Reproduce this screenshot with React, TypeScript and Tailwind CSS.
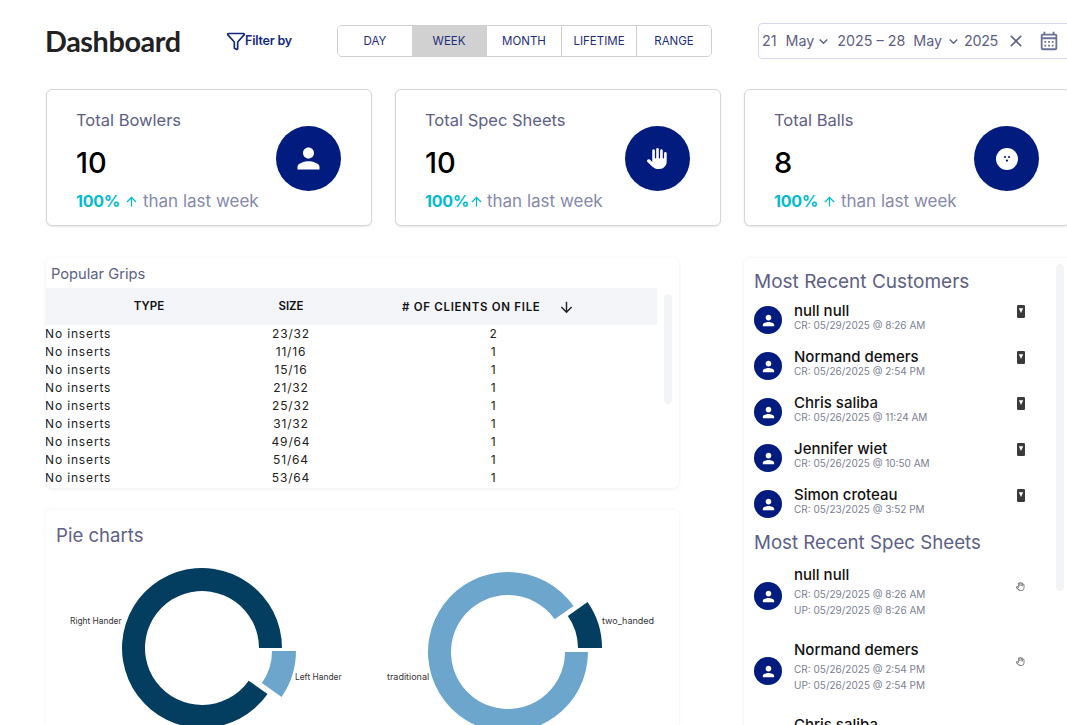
import React from "react";
import { MdPerson, MdOutlineCalendarMonth, MdKeyboardArrowDown, MdArrowUpward, MdArrowDownward, MdClose } from "react-icons/md";
import { FaHand, FaRegHand } from "react-icons/fa6";
import { Funnel } from "lucide-react";

function ring(cx: number, cy: number, R: number, r: number, a0: number, a1: number) {
  const p = (rad: number, a: number) => {
    const t = (a * Math.PI) / 180;
    return `${(cx + rad * Math.cos(t)).toFixed(2)} ${(cy + rad * Math.sin(t)).toFixed(2)}`;
  };
  const large = Math.abs(a1 - a0) > 180 ? 1 : 0;
  return `M${p(R, a0)} A${R} ${R} 0 ${large} 1 ${p(R, a1)} L${p(r, a1)} A${r} ${r} 0 ${large} 0 ${p(r, a0)} Z`;
}

function StatCard({ title, value, gap, icon }: { title: string; value: string; gap: string; icon: React.ReactNode }) {
  return (
    <div className="relative w-[326px] h-[137px] shrink-0 rounded-[6px] border border-[#d6d6d8] bg-white shadow-[0_1px_2px_rgba(0,0,0,0.1)] pl-[29px] pt-[20px]">
      <div className="text-[16.5px] leading-[20px] text-[#5d6185]">{title}</div>
      <div className="mt-[15px] text-[29px] leading-[36px] text-black font-medium">{value}</div>
      <div className="mt-[9px] flex items-center leading-[22px]">
        <span className="text-[16px] font-bold tracking-[-0.2px] text-[#00bccd]">100%</span>
        <MdArrowUpward className={`text-[#00bccd] ${gap}`} size={15} />
        <span className="text-[17px] text-[#8589ab]">than last week</span>
      </div>
      <div className="absolute left-[229px] top-[36px] w-[65px] h-[65px] rounded-full bg-[#021b7f] flex items-center justify-center text-white">
        {icon}
      </div>
    </div>
  );
}

function Avatar() {
  return (
    <div className="w-[28px] h-[28px] rounded-full bg-[#021b7f] flex items-center justify-center shrink-0 text-white">
      <MdPerson size={17} />
    </div>
  );
}

function PhoneIcon() {
  return (
    <svg width="8" height="13" viewBox="0 0 8 13">
      <rect width="8" height="13" rx="1.2" fill="#3a3a3c" />
      <path d="M1.8 3.2h4.4L4 8z" fill="#fff" />
    </svg>
  );
}

const customers = [
  ["null null", "CR: 05/29/2025 @ 8:26 AM"],
  ["Normand demers", "CR: 05/26/2025 @ 2:54 PM"],
  ["Chris saliba", "CR: 05/26/2025 @ 11:24 AM"],
  ["Jennifer wiet", "CR: 05/26/2025 @ 10:50 AM"],
  ["Simon croteau", "CR: 05/23/2025 @ 3:52 PM"],
];

const specs = [
  ["null null", "CR: 05/29/2025 @ 8:26 AM", "UP: 05/29/2025 @ 8:26 AM"],
  ["Normand demers", "CR: 05/26/2025 @ 2:54 PM", "UP: 05/26/2025 @ 2:54 PM"],
  ["Chris saliba", "CR: 05/26/2025 @ 11:24 AM", "UP: 05/26/2025 @ 11:24 AM"],
];

const rows = [
  ["23/32", "2"],
  ["11/16", "1"],
  ["15/16", "1"],
  ["21/32", "1"],
  ["25/32", "1"],
  ["31/32", "1"],
  ["49/64", "1"],
  ["51/64", "1"],
  ["53/64", "1"],
];

const tabs = ["DAY", "WEEK", "MONTH", "LIFETIME", "RANGE"];

export default function App() {
  return (
    <div className="relative w-[1067px] h-[725px] overflow-hidden bg-white font-['Inter',sans-serif] pl-[46px] pt-[23px]">
      <header className="flex items-center h-[36px] w-[1100px]">
        <h1 className="w-[180px] -ml-px mr-px font-['Lato',sans-serif] font-bold text-[28.8px] tracking-[-0.4px] text-[#222] leading-none">Dashboard</h1>
        <div className="w-[111px] flex items-center text-[#10297f] text-[12.5px] font-semibold tracking-[-0.2px]">
          <Funnel size={20} strokeWidth={2} className="text-[#10297f]" />
          <span className="-ml-px">Filter by</span>
        </div>
        <div className="flex w-[375px] h-[32px] rounded-[5px] border border-[#cfcfd2] overflow-hidden">
          {tabs.map((t, i) => (
            <div
              key={t}
              className={`flex-1 flex items-center justify-center pt-px text-[11.5px] text-[#1e2d80] ${i === 1 ? "bg-[#d1d1d1]" : "bg-white"} ${i > 1 ? "border-l border-[#cfcfd2]" : ""}`}
            >
              {t}
            </div>
          ))}
        </div>
        <div className="ml-[46px] flex items-center w-[320px] h-[36px] shrink-0 rounded-[4px] border border-[#d5d8ea] pl-[3px] text-[14.3px] text-[#5d6185]">
          <span>21</span>
          <span className="ml-[9px]">May</span>
          <MdKeyboardArrowDown size={17} className="ml-px" />
          <span className="ml-[5px]">2025 – 28</span>
          <span className="ml-[8px]">May</span>
          <MdKeyboardArrowDown size={17} className="ml-[3px]" />
          <span className="ml-[2px] tracking-[-0.3px]">2025</span>
          <MdClose size={20} className="ml-[8px] text-[#5d6185]" />
          <MdOutlineCalendarMonth size={22} className="ml-[12px] text-[#6a6f96]" />
        </div>
      </header>

      <section className="mt-[30px] flex gap-[23px] w-[1100px]">
        <StatCard title="Total Bowlers" value="10" gap="mx-[4px]" icon={<MdPerson size={33} />} />
        <StatCard title="Total Spec Sheets" value="10" gap="mr-[3px]" icon={<FaHand size={21} />} />
        <StatCard
          title="Total Balls"
          value="8"
          gap="mx-[4px]"
          icon={
            <div className="w-[22px] h-[22px] rounded-full bg-white flex items-center justify-center">
              <svg width="8" height="8" viewBox="0 0 8 8" fill="#021b7f">
                <circle cx="2" cy="2" r="1.1" />
                <circle cx="6" cy="2" r="1.1" />
                <circle cx="4" cy="5.6" r="1.1" />
              </svg>
            </div>
          }
        />
      </section>

      <div className="mt-[32px] flex gap-[65px] w-[1100px]">
        <div className="w-[633px] shrink-0">
          <div className="relative h-[230px] rounded-[6px] bg-white shadow-[0_1px_4px_rgba(0,0,0,0.07)] overflow-hidden">
            <div className="pl-[5px] pt-[7px] h-[30px] text-[14.7px] leading-[18px] text-[#5d6185]">Popular Grips</div>
            <div className="w-[611px] h-[37px] bg-[#f4f5f9] grid grid-cols-[206px_78px_327px] items-center text-[11.5px] font-semibold text-[#111]">
              <div className="text-center pt-px">TYPE</div>
              <div className="text-center pt-px">SIZE</div>
              <div className="flex items-center pl-[72px] pt-[2px]">
                <span className="tracking-[0.7px] whitespace-nowrap">
                  # OF CLIENTS ON FILE
                </span>
                <MdArrowDownward size={17} className="ml-[17px] text-[#222]" />
              </div>
            </div>
            {rows.map(([size, n], i) => (
              <div key={i} className="w-[611px] h-[18px] grid grid-cols-[206px_78px_327px] items-center text-[12px] tracking-[0.85px] text-[#222]">
                <div className="-ml-px">No inserts</div>
                <div className="text-center">{size}</div>
                <div className="text-center">{n}</div>
              </div>
            ))}
            <div className="absolute left-[618px] top-[36px] w-[8px] h-[110px] rounded-[4px] bg-[#f3f4f6]" />
          </div>

          <div className="mt-[22px] h-[300px] rounded-[6px] bg-white shadow-[0_0_4px_rgba(0,0,0,0.06)] overflow-hidden">
            <div className="pl-[10px] pt-[14px] text-[18.6px] leading-[22px] text-[#5d6185]">Pie charts</div>
            <div className="mt-[9px] flex">
              <svg width="300" height="170" viewBox="46 555 300 170" className="shrink-0">
                <path d={ring(202, 648, 80, 57, 35, 360)} fill="#033d5f" />
                <path d={ring(216, 651, 80, 56, 0, 35)} fill="#6ca6cd" />
                <text x="70" y="624" fontSize="8.4" fill="#333">Right Hander</text>
                <text x="295" y="680" fontSize="8.4" fill="#333">Left Hander</text>
              </svg>
              <svg width="320" height="170" viewBox="346 555 320 170" className="shrink-0">
                <path d={ring(508, 652, 80, 57, 0, 325)} fill="#6ca6cd" />
                <path d={ring(522, 648, 80, 56, 325, 360)} fill="#033d5f" />
                <text x="387" y="680" fontSize="9" fill="#333">traditional</text>
                <text x="602" y="624" fontSize="9" fill="#333">two_handed</text>
              </svg>
            </div>
          </div>
        </div>

        <aside className="relative w-[330px] h-[480px] shrink-0 rounded-[6px] bg-white shadow-[0_0_4px_rgba(0,0,0,0.07)] pl-[10px] pt-[13px]">
          <h2 className="text-[19px] leading-[22px] text-[#5d6185] whitespace-nowrap">Most Recent Customers</h2>
          <div className="mt-[8px]">
            {customers.map(([name, date]) => (
              <div key={date} className="flex h-[46px] w-[282px]">
                <div className="pt-[5px]"><Avatar /></div>
                <div className="ml-[12px] w-[222px] leading-none">
                  <div className="text-[15px] leading-[20px] font-medium text-[#111]">{name}</div>
                  <div className="text-[10px] leading-[10px] -mt-px text-[#7b8093]">{date}</div>
                </div>
                <div className="pt-[4px] pl-[1px]"><PhoneIcon /></div>
              </div>
            ))}
          </div>
          <h2 className="mt-[1px] text-[18.7px] leading-[22px] text-[#5d6185] whitespace-nowrap">Most Recent Spec Sheets</h2>
          <div className="mt-[11px]">
            {specs.map(([name, cr, up]) => (
              <div key={name} className="flex h-[75px] w-[282px]">
                <div className="pt-[17px]"><Avatar /></div>
                <div className="ml-[12px] w-[222px]">
                  <div className="text-[15px] leading-[20px] font-medium text-[#111]">{name}</div>
                  <div className="mt-px text-[10px] leading-[16px] text-[#7b8093]">{cr}</div>
                  <div className="text-[10px] leading-[16px] text-[#7b8093]">{up}</div>
                </div>
                <div className="pt-[17px]"><FaRegHand size={9} className="text-[#777]" /></div>
              </div>
            ))}
          </div>
          <div className="absolute left-[312px] top-[6px] w-[8px] h-[327px] rounded-[4px] bg-[#f3f4f6]" />
        </aside>
      </div>
    </div>
  );
}
